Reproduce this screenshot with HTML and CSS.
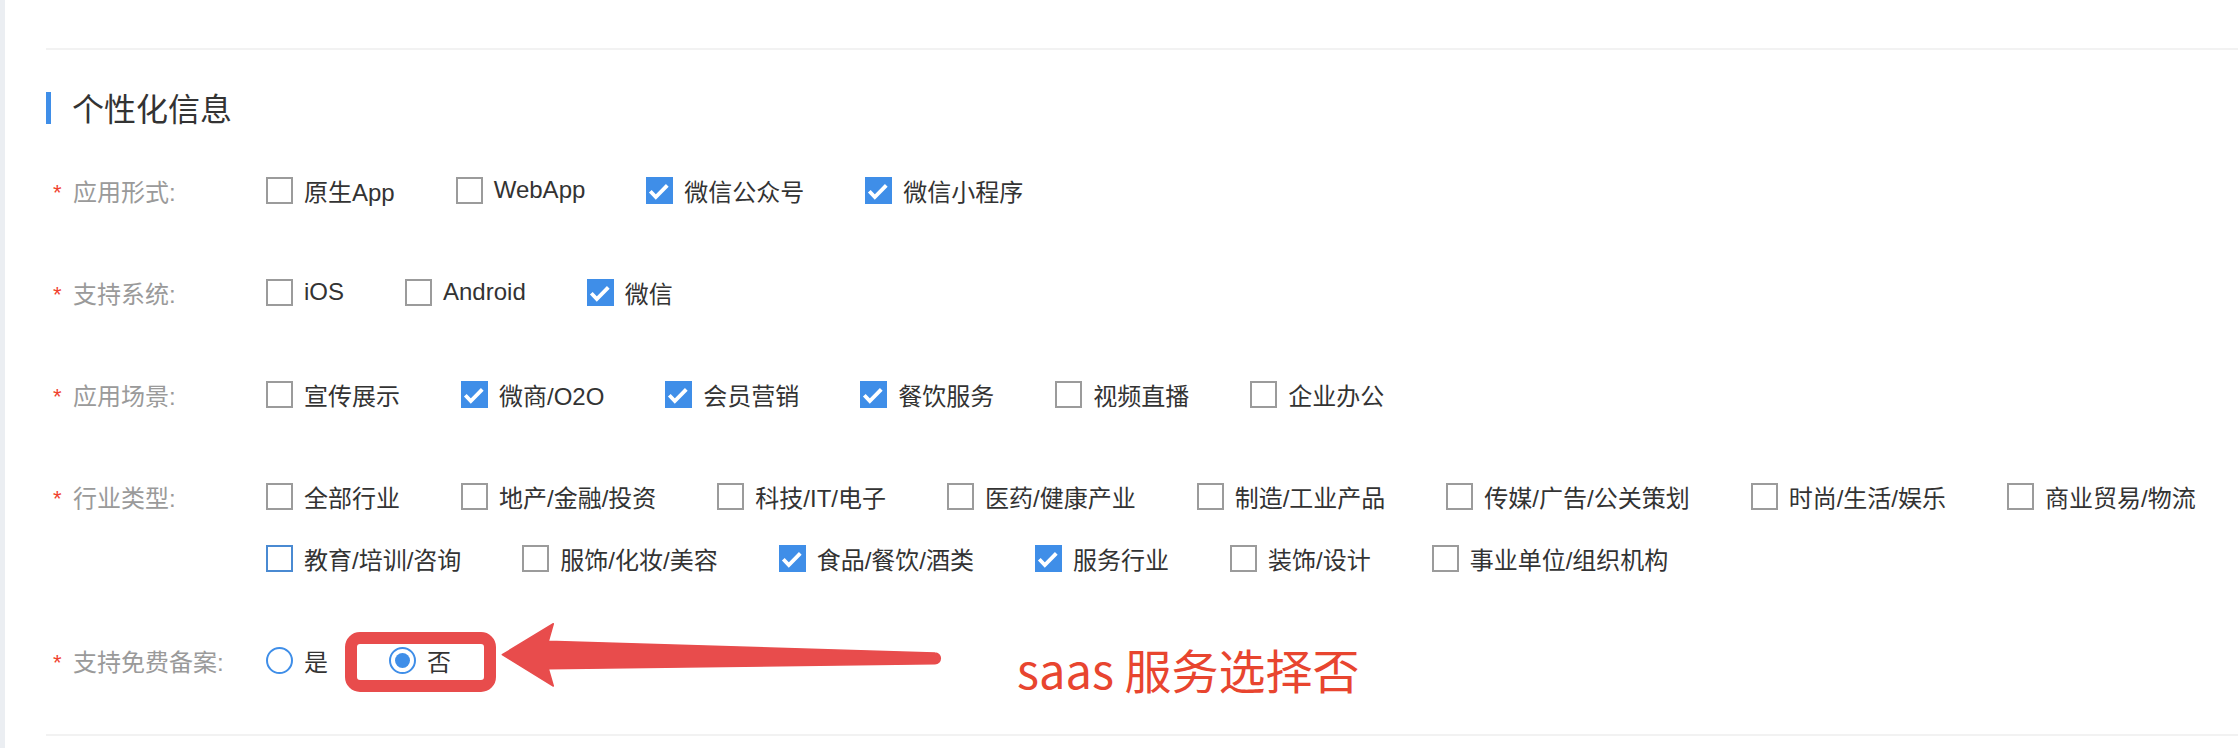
FILE: index.html
```html
<!DOCTYPE html>
<html>
<head>
	<meta charset="utf-8">
	<title>个性化信息</title>
	<link rel="stylesheet" href="styles.css">
</head>
<body>
	<div class="panel">
		<div class="line"></div>
		<h2 class="title">个性化信息</h2>

		<div class="form-item">
			<div class="form-label"><span class="req">*</span>应用形式:</div>
			<div class="group">
				<label class="ck"><span class="box"></span><span>原生App</span></label>
				<label class="ck"><span class="box"></span><span>WebApp</span></label>
				<label class="ck on"><span class="box"><svg viewBox="0 0 23 23"><path d="M2.3 12.3L7.8 18L19.3 6.3"/></svg></span><span>微信公众号</span></label>
				<label class="ck on"><span class="box"><svg viewBox="0 0 23 23"><path d="M2.3 12.3L7.8 18L19.3 6.3"/></svg></span><span>微信小程序</span></label>
			</div>
		</div>

		<div class="form-item">
			<div class="form-label"><span class="req">*</span>支持系统:</div>
			<div class="group">
				<label class="ck"><span class="box"></span><span>iOS</span></label>
				<label class="ck"><span class="box"></span><span>Android</span></label>
				<label class="ck on"><span class="box"><svg viewBox="0 0 23 23"><path d="M2.3 12.3L7.8 18L19.3 6.3"/></svg></span><span>微信</span></label>
			</div>
		</div>

		<div class="form-item">
			<div class="form-label"><span class="req">*</span>应用场景:</div>
			<div class="group">
				<label class="ck"><span class="box"></span><span>宣传展示</span></label>
				<label class="ck on"><span class="box"><svg viewBox="0 0 23 23"><path d="M2.3 12.3L7.8 18L19.3 6.3"/></svg></span><span>微商/O2O</span></label>
				<label class="ck on"><span class="box"><svg viewBox="0 0 23 23"><path d="M2.3 12.3L7.8 18L19.3 6.3"/></svg></span><span>会员营销</span></label>
				<label class="ck on"><span class="box"><svg viewBox="0 0 23 23"><path d="M2.3 12.3L7.8 18L19.3 6.3"/></svg></span><span>餐饮服务</span></label>
				<label class="ck"><span class="box"></span><span>视频直播</span></label>
				<label class="ck"><span class="box"></span><span>企业办公</span></label>
			</div>
		</div>

		<div class="form-item">
			<div class="form-label"><span class="req">*</span>行业类型:</div>
			<div class="group">
				<label class="ck"><span class="box"></span><span>全部行业</span></label>
				<label class="ck"><span class="box"></span><span>地产/金融/投资</span></label>
				<label class="ck"><span class="box"></span><span>科技/IT/电子</span></label>
				<label class="ck"><span class="box"></span><span>医药/健康产业</span></label>
				<label class="ck"><span class="box"></span><span>制造/工业产品</span></label>
				<label class="ck"><span class="box"></span><span>传媒/广告/公关策划</span></label>
				<label class="ck"><span class="box"></span><span>时尚/生活/娱乐</span></label>
				<label class="ck"><span class="box"></span><span>商业贸易/物流</span></label>
				<label class="ck hover"><span class="box"></span><span>教育/培训/咨询</span></label>
				<label class="ck"><span class="box"></span><span>服饰/化妆/美容</span></label>
				<label class="ck on"><span class="box"><svg viewBox="0 0 23 23"><path d="M2.3 12.3L7.8 18L19.3 6.3"/></svg></span><span>食品/餐饮/酒类</span></label>
				<label class="ck on"><span class="box"><svg viewBox="0 0 23 23"><path d="M2.3 12.3L7.8 18L19.3 6.3"/></svg></span><span>服务行业</span></label>
				<label class="ck"><span class="box"></span><span>装饰/设计</span></label>
				<label class="ck"><span class="box"></span><span>事业单位/组织机构</span></label>
			</div>
		</div>

		<div class="form-item last">
			<div class="form-label"><span class="req">*</span>支持免费备案:</div>
			<div class="group">
				<label class="ck rd"><span class="box"></span><span>是</span></label>
				<label class="ck rd on mark"><span class="box"></span><span>否</span></label>
			</div>
			<!-- 标注 -->
			<svg class="arrow" width="450" height="70" viewBox="0 0 450 70">
				<path d="M2.3 34.7L53.3 3.7L48.3 21.3L435 33A5.35 5.35 0 0 1 435 43.7L48.3 48.7L53.3 66Z"/>
			</svg>
			<div class="note">saas 服务选择否</div>
		</div>

		<div class="line"></div>
	</div>
</body>
</html>
```

FILE: styles.css
```css
*,
*::before,
*::after{
	margin: 0;
	padding: 0;
	box-sizing: border-box;
}
body{
	background: #ebeef2;
	font-family: "Liberation Sans", "Noto Sans CJK SC", sans-serif;
}
.panel{
	margin-left: 5px;
	min-height: 748px;
	background: #fff;
	padding: 48px 0 0 41px;
}
.line{
	height: 2px;
	background: #f2f2f2;
}
.title{
	margin: 42px 0 46px;
	height: 32px;
	line-height: 36px;
	font-size: 32px;
	font-weight: normal;
	color: #333;
	border-left: 5px solid #3f8ee8;
	padding-left: 21px;
}

/* 表单行 */
.form-item{
	display: flex;
	position: relative;
	margin-bottom: 62px;
}
.form-item.last{
	margin-bottom: 54px;
}
.form-label{
	flex: none;
	width: 220px;
	height: 40px;
	padding-left: 7px;
	display: flex;
	align-items: center;
	font-size: 24px;
	color: #9a9a9a;
}
.req{
	width: 20px;
	padding-top: 6px;
	font-size: 22px;
	line-height: 20px;
	color: #f0412f;
}
.group{
	flex: 1;
	display: flex;
	flex-wrap: wrap;
	column-gap: 61px;
	row-gap: 22px;
}

/* 复选框 / 单选框 */
.ck{
	display: flex;
	align-items: center;
	height: 40px;
	font-size: 24px;
	color: #333;
	position: relative;
}
.box{
	width: 27px;
	height: 27px;
	margin-right: 11px;
	border: 2px solid #9b9b9b;
	background: #fff;
}
.box svg{
	display: block;
	width: 23px;
	height: 23px;
}
.box path{
	fill: none;
	stroke: #fff;
	stroke-width: 3.8;
}
.ck.on .box{
	background: #3f8ee8;
	border-color: #3f8ee8;
}
.ck.hover .box{
	border-color: #4a8ad2;
}
.rd .box{
	border-radius: 50%;
	border-color: #3f8ee8;
	display: flex;
	align-items: center;
	justify-content: center;
}
.ck.rd.on .box{
	background: #fff;
}
.rd.on .box::after{
	content: "";
	width: 15px;
	height: 15px;
	border-radius: 50%;
	background: #3f8ee8;
}

/* 标注 */
.mark::before{
	content: "";
	position: absolute;
	left: -44px;
	top: -8px;
	width: 151px;
	height: 60px;
	border: 12px solid #e84c4c;
	border-radius: 15px;
}
.arrow{
	position: absolute;
	left: 454px;
	top: -20px;
}
.arrow path{
	fill: #e84c4c;
	stroke: #e84c4c;
	stroke-width: 1.5;
	stroke-linejoin: round;
}
.note{
	position: absolute;
	left: 971px;
	top: 5px;
	font-family: "Noto Sans CJK SC", sans-serif;
	font-size: 47px;
	line-height: 47px;
	color: #e8452f;
	white-space: nowrap;
}
```
